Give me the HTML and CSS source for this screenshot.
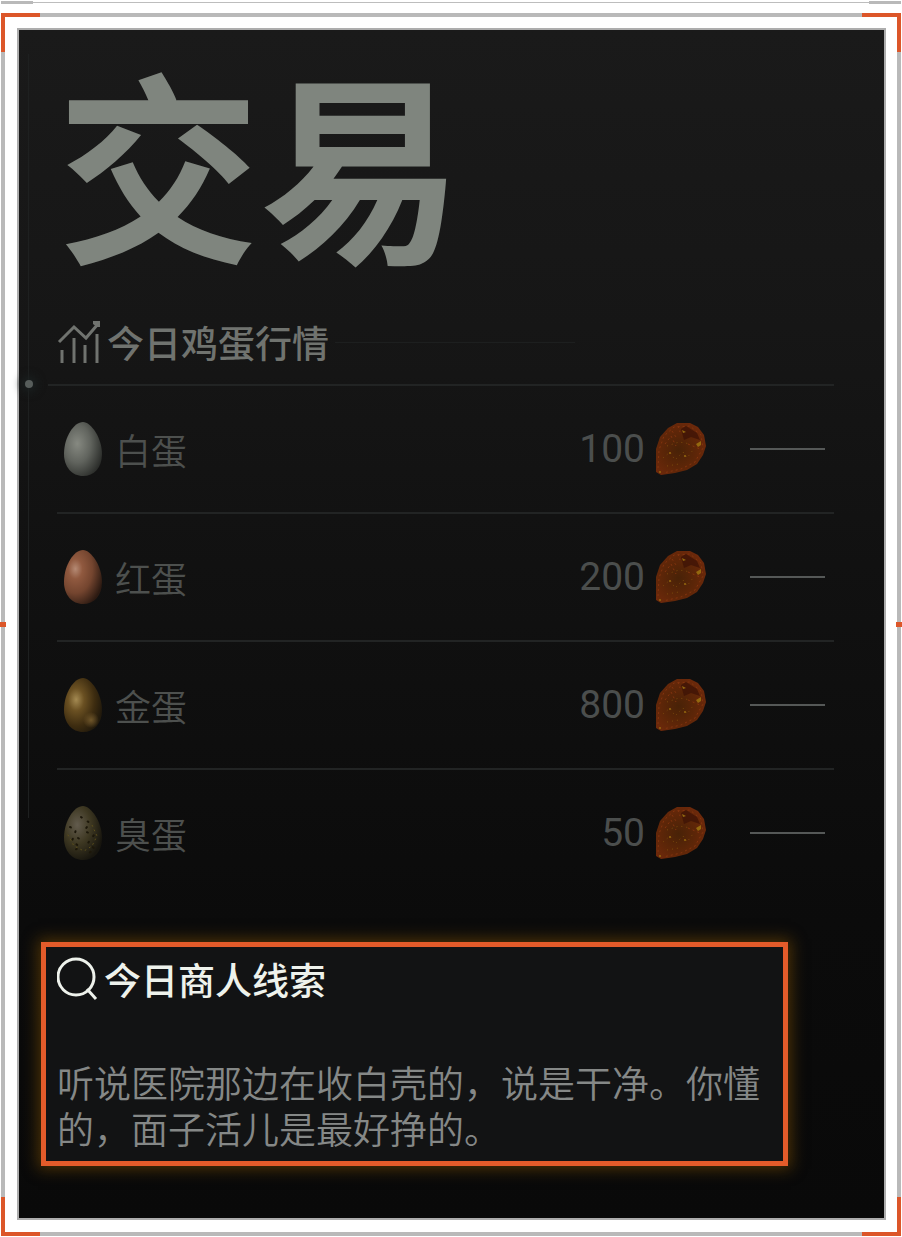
FILE: index.html
```html
<!doctype html>
<html lang="zh-CN">
  <head>
    <meta charset="utf-8" />
    <meta name="viewport" content="width=device-width, initial-scale=1" />
    <title>交易</title>
    <link rel="stylesheet" href="styles.css">
  </head>
  <body>
	<!-- shared gradients and the gem -->
	<svg class="defs" aria-hidden="true">
		<defs>
			<radialGradient id="white-egg" cx="35%" cy="40%" r="70%">
				<stop offset="0" stop-color="#868981"/>
				<stop offset="0.5" stop-color="#61645e"/>
				<stop offset="1" stop-color="#2b2d2a"/>
			</radialGradient>
			<radialGradient id="red-egg" cx="30%" cy="35%" r="75%">
				<stop offset="0" stop-color="#b58a74"/>
				<stop offset="0.25" stop-color="#90593f"/>
				<stop offset="0.6" stop-color="#74452f"/>
				<stop offset="1" stop-color="#2c1a12"/>
			</radialGradient>
			<radialGradient id="gold-egg" cx="32%" cy="40%" r="70%">
				<stop offset="0" stop-color="#a48a52"/>
				<stop offset="0.3" stop-color="#6a5022"/>
				<stop offset="0.7" stop-color="#3d2c10"/>
				<stop offset="1" stop-color="#221a0c"/>
			</radialGradient>
			<radialGradient id="gold-spot">
				<stop offset="0" stop-color="#6f562a"/>
				<stop offset="1" stop-color="#6f562a" stop-opacity="0"/>
			</radialGradient>
			<radialGradient id="bad-egg" cx="35%" cy="35%" r="70%">
				<stop offset="0" stop-color="#625b4d"/>
				<stop offset="0.5" stop-color="#3e3822"/>
				<stop offset="1" stop-color="#17150e"/>
			</radialGradient>
			<radialGradient id="gem-fill" cx="45%" cy="52%" r="60%">
				<stop offset="0" stop-color="#482207"/>
				<stop offset="0.6" stop-color="#5e2608"/>
				<stop offset="1" stop-color="#6e290b"/>
			</radialGradient>
			<symbol id="egg" viewBox="0 0 38 56">
				<path d="M19 1C27 1 38 17 38 33C38 47 30 55 19 55C8 55 0 46 0 33C0 16 10 1 19 1Z"/>
			</symbol>
			<symbol id="gem" viewBox="0 0 52 54">
				<path fill="url(#gem-fill)" d="M1 50L1 27L5 15L13 6L22 1L35 1L43 5L49 13L51 24L48 33L42 42L32 48L20 51L6 53Z"/>
				<path fill="#3a1105" d="M26 7L31 4L42 11L45 18L36 15L29 18Z" opacity="0.7"/>
				<path fill="none" stroke="#83340f" stroke-dasharray="2 3" d="M3 46L4 28L9 14L19 5L35 4L46 13L48 26L40 40L26 47L8 51M10 22L16 14L21 24M23 4L25 10M17 9L21 15M33 22L45 27"/>
				<path fill="none" stroke="#7a4a0c" stroke-dasharray="1 4" d="M8 36L15 30L20 38L28 30L32 36L38 28M12 24L24 20L36 22M12 44L24 42"/>
				<g fill="#94690f">
					<path d="M41 22L46 19L46 23L43 25ZM27 8L31 10L28 11Z"/>
					<circle cx="15" cy="31" r="1"/>
					<circle cx="30" cy="34" r="1"/>
					<circle cx="5" cy="50" r="1"/>
				</g>
			</symbol>
		</defs>
	</svg>

	<div class="strip"></div>
	<div class="frame">
		<i class="corner top left"></i>
		<i class="corner top right"></i>
		<i class="corner bottom left"></i>
		<i class="corner bottom right"></i>
		<i class="tick left"></i>
		<i class="tick right"></i>

		<main class="panel">
			<h1>交易</h1>

			<section class="market">
				<h2>
					<svg class="icon" viewBox="0 0 44 44" fill="none" stroke="currentColor" stroke-width="3">
						<path d="M2 22L17 7L29 18L41 4M5 30V43M17 18V43M28 25V43M40 14V43"/>
						<path fill="currentColor" stroke="none" d="M36 1H43V7L40 7L36 4Z"/>
					</svg>
					今日鸡蛋行情
				</h2>
				<ul class="prices">
					<li>
						<svg class="egg" fill="url(#white-egg)"><use href="#egg"/></svg>
						<span class="name">白蛋</span>
						<span class="price">100</span>
						<svg class="gem"><use href="#gem"/></svg>
						<span class="trend"></span>
					</li>
					<li>
						<svg class="egg" fill="url(#red-egg)"><use href="#egg"/></svg>
						<span class="name">红蛋</span>
						<span class="price">200</span>
						<svg class="gem"><use href="#gem"/></svg>
						<span class="trend"></span>
					</li>
					<li>
						<svg class="egg" fill="url(#gold-egg)">
							<use href="#egg"/>
							<circle cx="27" cy="43" r="8" fill="url(#gold-spot)"/>
						</svg>
						<span class="name">金蛋</span>
						<span class="price">800</span>
						<svg class="gem"><use href="#gem"/></svg>
						<span class="trend"></span>
					</li>
					<li>
						<svg class="egg" fill="url(#bad-egg)">
							<use href="#egg"/>
							<path fill="none" stroke="#1c170a" stroke-width="2" stroke-linecap="round" stroke-dasharray="1 7" d="M6 22L12 25L8 36L16 42L9 46M17 12L26 18L20 26L30 30L24 38L31 44L22 50M14 33L19 36"/>
							<path fill="none" stroke="#5c4f1b" stroke-linecap="round" stroke-dasharray="1 4" d="M4 30L10 41L20 46L28 41L33 31L28 20"/>
						</svg>
						<span class="name">臭蛋</span>
						<span class="price">50</span>
						<svg class="gem"><use href="#gem"/></svg>
						<span class="trend"></span>
					</li>
				</ul>
			</section>

			<section class="clue">
				<h2>
					<svg class="icon" viewBox="2 0 42 44" fill="none" stroke="currentColor" stroke-width="3">
						<circle cx="21" cy="20" r="18"/>
						<path d="M32 32L41 42"/>
					</svg>
					今日商人线索
				</h2>
				<p>听说医院那边在收白壳的，说是干净。你懂的，面子活儿是最好挣的。</p>
			</section>
		</main>
	</div>
  </body>
</html>
```
FILE: styles.css
```css
* {
	box-sizing: border-box;
}

body {
	margin: 0;
	padding: 1px;
	background: #fff;
	font-family: "Noto Sans CJK SC", sans-serif;
}

.defs {
	position: absolute;
	width: 0;
	height: 0;
}

/* thin line above the frame, thicker at both ends */
.strip {
	height: 3px;
	margin-bottom: 9px;
	background:
		linear-gradient(#b9b9b9, #b9b9b9) left / 32px 3px no-repeat,
		linear-gradient(#b9b9b9, #b9b9b9) right / 32px 3px no-repeat,
		linear-gradient(#bdbdbd, #bdbdbd) center / 100% 1px no-repeat;
}

.frame {
	position: relative;
	padding: 11px 11px 12px 12px;
	border: 4px solid #b9b9b9;
}

.corner {
	position: absolute;
	width: 39px;
	height: 39px;
	border: 0 solid #dc5629;
}

.top {
	top: -4px;
	border-top-width: 4px;
}

.bottom {
	bottom: -4px;
	border-bottom-width: 4px;
}

.corner.left {
	left: -4px;
	border-left-width: 4px;
}

.corner.right {
	right: -4px;
	border-right-width: 4px;
}

.tick {
	position: absolute;
	top: 50%;
	width: 6px;
	height: 5px;
	margin-top: -3px;
	background: #dc5629;
}

.tick.left {
	left: -5px;
}

.tick.right {
	right: -5px;
}

.panel {
	position: relative;
	padding: 28px 50px 52px 38px;
	border: 2px solid #adadad;
	background: linear-gradient(#1a1a1a, #161616 25%, #111 45%, #0b0b0b 75%, #090909);
}

/* faint rail down the left side */
.panel::before {
	content: "";
	position: absolute;
	top: 24px;
	bottom: 400px;
	left: 9px;
	width: 1px;
	background: #1e2020;
}

h1 {
	margin: 0;
	font-size: 203px;
	font-weight: 700;
	line-height: 204px;
	color: #7f857e;
}

h2 {
	display: flex;
	align-items: center;
	gap: 6px;
	margin: 0;
	font-size: 37px;
	font-weight: 500;
	line-height: 48px;
}

.icon {
	flex: none;
	width: 44px;
	height: 44px;
}

.market {
	padding-top: 56px;
}

.market h2 {
	padding-bottom: 18px;
	color: #70736f;
}

.market h2::after {
	content: "";
	width: 240px;
	height: 1px;
	background: #1d1f1f;
}

.prices {
	position: relative;
	margin: 0;
	padding: 0;
	list-style: none;
}

/* line above the first row starts further left and has a dot on the rail */
.prices::before {
	content: "";
	position: absolute;
	top: 0;
	left: -9px;
	width: 9px;
	height: 2px;
	background: #222424;
}

.prices::after {
	content: "";
	position: absolute;
	top: -4px;
	left: -32px;
	width: 8px;
	height: 8px;
	border-radius: 50%;
	background: #575d5b;
	box-shadow: 0 0 8px 4px #1a2020;
}

.prices li {
	display: flex;
	align-items: center;
	height: 128px;
	padding: 0 9px 0 7px;
	border-top: 2px solid #222424;
}

.egg {
	flex: none;
	width: 38px;
	height: 56px;
}

.name {
	margin-left: 13px;
	font-size: 36px;
	font-weight: 350;
	color: #4d504e;
}

.price {
	margin-left: auto;
	font-family: Roboto, sans-serif;
	font-size: 39px;
	color: #4b4e4d;
}

.gem {
	flex: none;
	width: 52px;
	height: 54px;
	margin-left: 10px;
}

.trend {
	width: 75px;
	height: 2px;
	margin-left: 43px;
	background: #555857;
}

.clue {
	margin: 46px 46px 0 -16px;
	padding: 8px 10px 10px 11px;
	border: 5px solid #e35b2a;
	background: #121314;
	box-shadow: 0 0 14px 3px #4c3206;
}

.clue h2 {
	gap: 5px;
	color: #eef2ec;
}

.clue .icon {
	width: 42px;
}

.clue p {
	margin: 56px 0 0;
	font-size: 37px;
	font-weight: 350;
	line-height: 46px;
	color: #858887;
}
```
